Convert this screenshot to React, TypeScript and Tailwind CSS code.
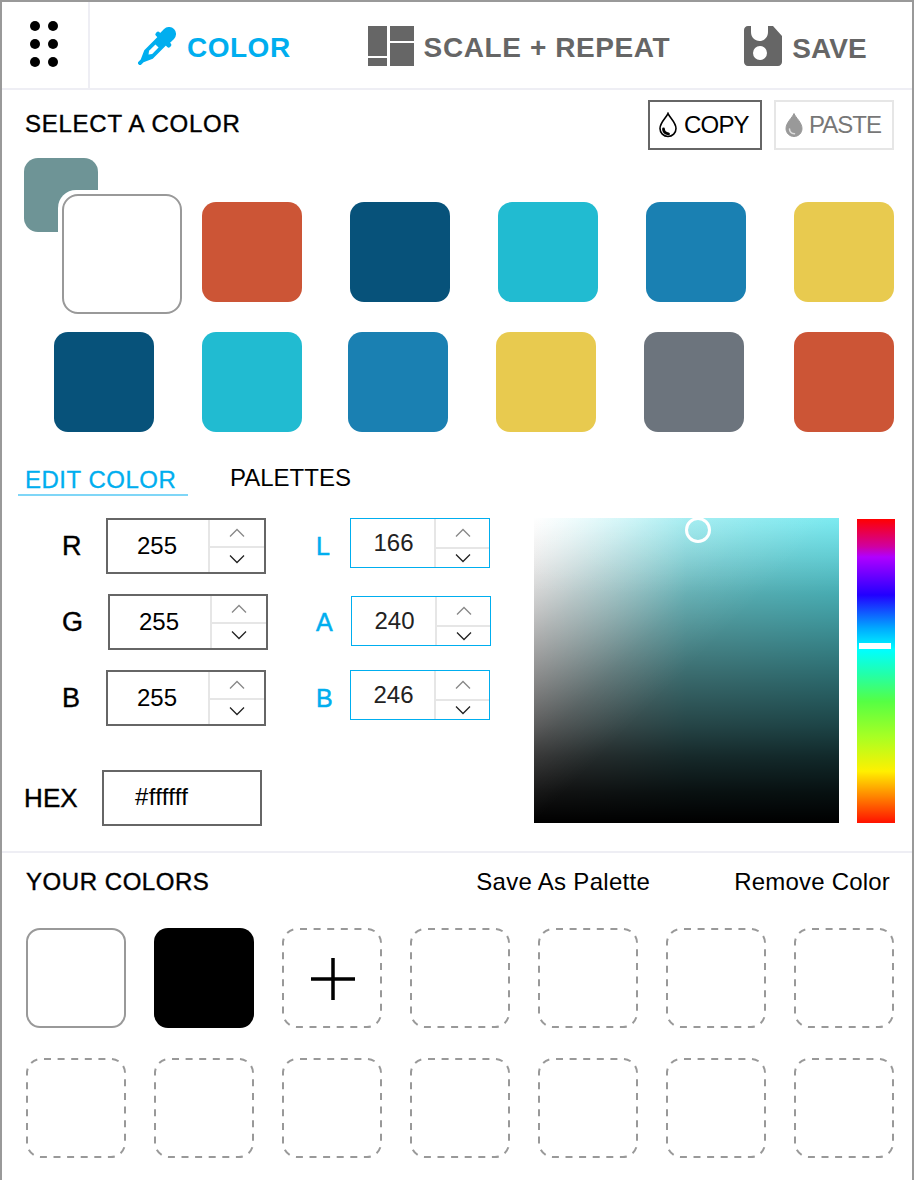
import React from "react";

const sans = "font-['Liberation_Sans',Arial,sans-serif]";

function Eyedropper() {
  return (
    <svg viewBox="0 0 38 38" className="w-[38px] h-[38px] text-[#00aeef]" fill="currentColor">
      <g transform="translate(19 19) rotate(45)">
        <path d="M-7 -9V-17a7 7 0 0 1 14 0V-9z" />
        <rect x="-10" y="-11.500" width="20" height="5" rx="2" />
        <path d="M-6 -7H6V12L2 21V26H-2V21L-6 12z" />
        <path d="M-2.200 0H2.200V9L0 12L-2.200 9z" fill="white" />
      </g>
    </svg>
  );
}

function GridIcon() {
  return (
    <svg viewBox="0 0 46 40" className="w-[46px] h-[40px]" fill="#666">
      <rect x="0" y="0" width="19" height="30" />
      <rect x="0" y="32" width="19" height="8" />
      <rect x="22" y="0" width="24" height="15" />
      <rect x="22" y="17" width="24" height="23" />
    </svg>
  );
}

function SaveIcon() {
  return (
    <svg viewBox="0 0 38 40" className="w-[38px] h-[40px]">
      <path
        fill="#666"
        fillRule="evenodd"
        d="M4 0H7V6C7 11.500 11 15 15.500 15S24 11.500 24 6V0H29L38 10V36C38 38.200 36.200 40 34 40H4C1.800 40 0 38.200 0 36V4C0 1.800 1.800 0 4 0zM9 27a7 7 0 1 0 14 0a7 7 0 1 0 -14 0z"
      />
    </svg>
  );
}

function Drop({ muted }: { muted?: boolean }) {
  const color = muted ? "#999" : "#000";
  return (
    <svg viewBox="0 0 20 26" className="w-[20px] h-[26px] shrink-0 -mt-[1px]">
      <path
        d="M10 1.500C8.500 5.500 2 10.500 2 16.500C2 21 5.500 24.500 10 24.500S18 21 18 16.500C18 10.500 11.500 5.500 10 1.500z"
        fill={muted ? color : "white"}
        stroke={color}
        strokeWidth={muted ? 1 : 1.600}
      />
      <path
        d="M5.500 17c0 2.800 2 4.500 5 4.800"
        fill="none"
        stroke={muted ? "#ddd" : color}
        strokeWidth={muted ? 1.500 : 2.800}
        strokeLinecap="round"
      />
    </svg>
  );
}

function Swatch({ color, className = "" }: { color: string; className?: string }) {
  return <div className={`w-[100px] h-[100px] rounded-[14px] shrink-0 ${className}`} style={{ backgroundColor: color }} />;
}

function EmptySlot({ children }: { children?: React.ReactNode }) {
  return (
    <div className="relative w-[100px] h-[100px] flex items-center justify-center">
      <svg viewBox="0 0 100 100" className="absolute inset-0 w-full h-full" fill="none">
        <rect x="1" y="1" width="98" height="98" rx="14" stroke="#999" strokeWidth="2" strokeDasharray="7 6.600" strokeDashoffset="-3" />
      </svg>
      {children}
    </div>
  );
}

function SpinBox({
  value,
  blue,
  className = "",
}: {
  value: number;
  blue?: boolean;
  className?: string;
}) {
  return (
    <div
      className={`flex box-border bg-white shrink-0 ${
        blue ? "w-[140px] h-[50px] border border-[#00aeef] text-[#222]" : "w-[160px] h-[56px] border-2 border-[#666] text-black"
      } ${className}`}
    >
      <div className={`flex-1 flex items-center justify-center text-[24px] ${blue ? "pl-[2px]" : "pr-[2px]"}`}>{value}</div>
      <div className={`shrink-0 flex flex-col border-l-2 border-[#e6e6e6] ${blue ? "w-[55px]" : "w-[56px]"}`}>
        <div className={`flex items-center justify-center border-b-2 border-[#e6e6e6] ${blue ? "h-[30px]" : "h-[28px]"}`}>
          <svg viewBox="0 0 16 10" className="w-[16px] h-[10px]" fill="none" stroke="#888" strokeWidth="1.300">
            <path d="M1 8.500L8 1.500l7 7" />
          </svg>
        </div>
        <div className={`flex-1 flex items-center justify-center ${blue ? "" : "pb-[3px]"}`}>
          <svg viewBox="0 0 16 10" className="w-[16px] h-[10px]" fill="none" stroke="#222" strokeWidth="1.300">
            <path d="M1 1.500l7 7 7-7" />
          </svg>
        </div>
      </div>
    </div>
  );
}

const topRow = ["#cc5536", "#07527a", "#21bbd1", "#1a80b2", "#e8ca4f"];
const secondRow = [
  { color: "#07527a", ml: "ml-[52px]" },
  { color: "#21bbd1", ml: "ml-[48px]" },
  { color: "#1a80b2", ml: "ml-[46px]" },
  { color: "#e8ca4f", ml: "ml-[48px]" },
  { color: "#6c747d", ml: "ml-[48px]" },
  { color: "#cc5536", ml: "ml-[50px]" },
];

export default function App() {
  return (
    <div className={`${sans} w-[914px] h-[1180px] box-border border-x-2 border-t-2 border-[#999] bg-white text-black overflow-hidden`}>
      {/* top nav */}
      <div className="flex h-[86px] box-content border-b-2 border-[#eeeef4]">
        <div className="w-[86px] box-content border-r-2 border-[#eeeef4] flex items-center justify-center">
          <div className="grid grid-cols-2 gap-x-[8px] gap-y-[8px] -ml-[3px] -mt-[2px]">
            {[0, 1, 2, 3, 4, 5].map((i) => (
              <span key={i} className="w-[10px] h-[10px] rounded-full bg-black" />
            ))}
          </div>
        </div>
        <div className="flex items-center pt-[2px]">
          <div className="ml-[48px] flex items-center gap-[11px] text-[#00aeef]">
            <Eyedropper />
            <span className="text-[28px] font-bold tracking-[0.5px] mt-[4px]">COLOR</span>
          </div>
          <div className="ml-[77px] flex items-center gap-[10px] text-[#666]">
            <GridIcon />
            <span className="text-[28px] font-bold tracking-[0.6px] mt-[4px]">SCALE + REPEAT</span>
          </div>
          <div className="ml-[74px] flex items-center gap-[10px] text-[#666]">
            <SaveIcon />
            <span className="text-[28px] font-bold tracking-[0.1px] mt-[6px]">SAVE</span>
          </div>
        </div>
      </div>

      {/* select a color */}
      <div className="pt-[10px] flex items-center justify-between pl-[22px] pr-[18px] h-[60px] box-border">
        <h2 className="text-[24px] tracking-[0.75px] -mt-[2px] ml-[1px] [-webkit-text-stroke:0.4px_black]">SELECT A COLOR</h2>
        <div className="flex gap-[12px]">
          <button className="w-[114px] h-[50px] box-border border-2 border-[#666] flex items-center pl-[8px] gap-[6px] text-[24px] tracking-[-0.8px]">
            <Drop />
            COPY
          </button>
          <button className="w-[120px] h-[50px] box-border border-2 border-[#e6e6e6] flex items-center pl-[8px] gap-[5px] text-[24px] text-[#777] tracking-[-1px]">
            <Drop muted />
            PASTE
          </button>
        </div>
      </div>

      <div className="mt-[8px] flex items-start">
        <div className="relative ml-[22px] w-[158px] h-[156px] shrink-0">
          <div className="w-[74px] h-[74px] rounded-[14px] bg-[#6e9496]" />
          {/* current color sits over the previous one */}
          <div className="absolute left-[34px] top-[32px] w-[124px] h-[124px] rounded-[18px] bg-white p-[4px]">
            <div className="w-[120px] h-[120px] box-border rounded-[16px] border-2 border-[#999] bg-white" />
          </div>
        </div>
        <div className="flex ml-[20px] mt-[44px] gap-[48px]">
          {topRow.map((c, i) => (
            <Swatch key={i} color={c} />
          ))}
        </div>
      </div>

      <div className="mt-[18px] flex">
        {secondRow.map((s, i) => (
          <Swatch key={i} color={s.color} className={s.ml} />
        ))}
      </div>

      {/* tabs */}
      <div className="mt-[30px] ml-[16px] flex h-[34px]">
        <div className="w-[170px] box-border border-b-2 border-[#7fd6f7] pl-[7px] text-[24px] tracking-[0.5px] text-[#00aeef] leading-[36px] [-webkit-text-stroke:0.3px_#00aeef]">
          EDIT COLOR
        </div>
        <div className="ml-[42px] text-[24px] leading-[32px]">PALETTES</div>
      </div>

      {/* editor */}
      <div className="mt-[22px] flex pl-[22px]">
        <div className="w-[466px] shrink-0">
          <div className="flex">
            <div className="ml-[38px] w-[254px] shrink-0 flex flex-col gap-[20px]">
              {[
                { label: "R", value: 255, ml: "ml-[44px]" },
                { label: "G", value: 255, ml: "ml-[46px]" },
                { label: "B", value: 255, ml: "ml-[44px]" },
              ].map((r) => (
                <div key={r.label} className="flex items-center h-[56px]">
                  <span className="w-[0px] text-[27px] [-webkit-text-stroke:0.4px_black]">{r.label}</span>
                  <SpinBox value={r.value} className={r.ml} />
                </div>
              ))}
            </div>
            <div className="flex flex-col gap-[20px] text-[#00aeef]">
              {[
                { label: "L", value: 166, ml: "ml-[34px]", mt: "" },
                { label: "A", value: 240, ml: "ml-[35px]", mt: "mt-[2px]" },
                { label: "B", value: 246, ml: "ml-[34px]", mt: "" },
              ].map((r) => (
                <div key={r.label} className="flex h-[56px]">
                  <span className="w-[0px] text-[25px] leading-[56px] [-webkit-text-stroke:0.5px_#00aeef]">{r.label}</span>
                  <SpinBox value={r.value} blue className={`${r.ml} ${r.mt}`} />
                </div>
              ))}
            </div>
          </div>
          <div className="mt-[44px] flex items-center">
            <span className="w-[78px] text-[26px] tracking-[0.1px] [-webkit-text-stroke:0.4px_black]">HEX</span>
            <div className="w-[160px] h-[56px] box-border border-2 border-[#666] flex items-center pl-[31px] pb-[2px] text-[24px] tracking-[0.3px]">#ffffff</div>
          </div>
        </div>

        <div className="ml-[44px] relative w-[305px] h-[305px] shrink-0 bg-[linear-gradient(to_bottom,rgba(255,255,255,0.18),rgba(255,255,255,0)_25%),linear-gradient(135deg,rgba(255,255,255,0.5),rgba(255,255,255,0.22)_20%,rgba(255,255,255,0.06)_38%,rgba(255,255,255,0)_50%),linear-gradient(to_bottom,rgba(0,0,0,0),rgba(0,0,0,0.52)_50%,rgba(0,0,0,0.7)_68%,rgba(0,0,0,0.82)_78%,rgba(0,0,0,0.93)_90%,#000_100%),linear-gradient(to_right,#fff,#7ee6ec_50%,#5fe6ee)]">
          <span className="absolute left-[151px] -top-[1px] w-[26px] h-[26px] box-border rounded-full border-[3px] border-white" />
        </div>
        <div className="ml-[18px] mt-[1px] relative w-[38px] h-[304px] shrink-0 bg-[linear-gradient(to_bottom,#ff0000,#d0009f_9%,#b000ff_12.500%,#2200ff_25%,#00aaff_36%,#00ffff_43%,#22ffaa_51%,#55ff44_60%,#aaff22_72%,#fff000_83%,#ff8800_91%,#ff1100_100%)]">
          <span className="absolute left-[2px] top-[124px] w-[32px] h-[6px] bg-white" />
        </div>
      </div>

      {/* your colors */}
      <div className="mt-[25px] border-t-2 border-[#eeeef4] pt-[14px] pl-[24px] pr-[22px]">
        <div className="flex items-center h-[30px]">
          <h2 className="text-[24px] tracking-[0.55px] [-webkit-text-stroke:0.4px_black]">YOUR COLORS</h2>
          <span className="ml-auto text-[24px] tracking-[0.3px]">Save As Palette</span>
          <span className="ml-[84px] text-[24px] tracking-[0.2px]">Remove Color</span>
        </div>
        <div className="mt-[31px] grid grid-cols-[repeat(7,100px)] gap-x-[28px] gap-y-[30px]">
          <div className="w-[100px] h-[100px] box-border rounded-[14px] border-2 border-[#999] bg-white" />
          <Swatch color="#000000" />
          <EmptySlot>
            <svg viewBox="0 0 44 44" className="w-[44px] h-[44px] relative ml-[2px] mt-[2px]" stroke="#000" strokeWidth="3.500">
              <path d="M22 1v42M0 22h44" />
            </svg>
          </EmptySlot>
          {Array.from({ length: 11 }).map((_, i) => (
            <EmptySlot key={i} />
          ))}
        </div>
      </div>
    </div>
  );
}
